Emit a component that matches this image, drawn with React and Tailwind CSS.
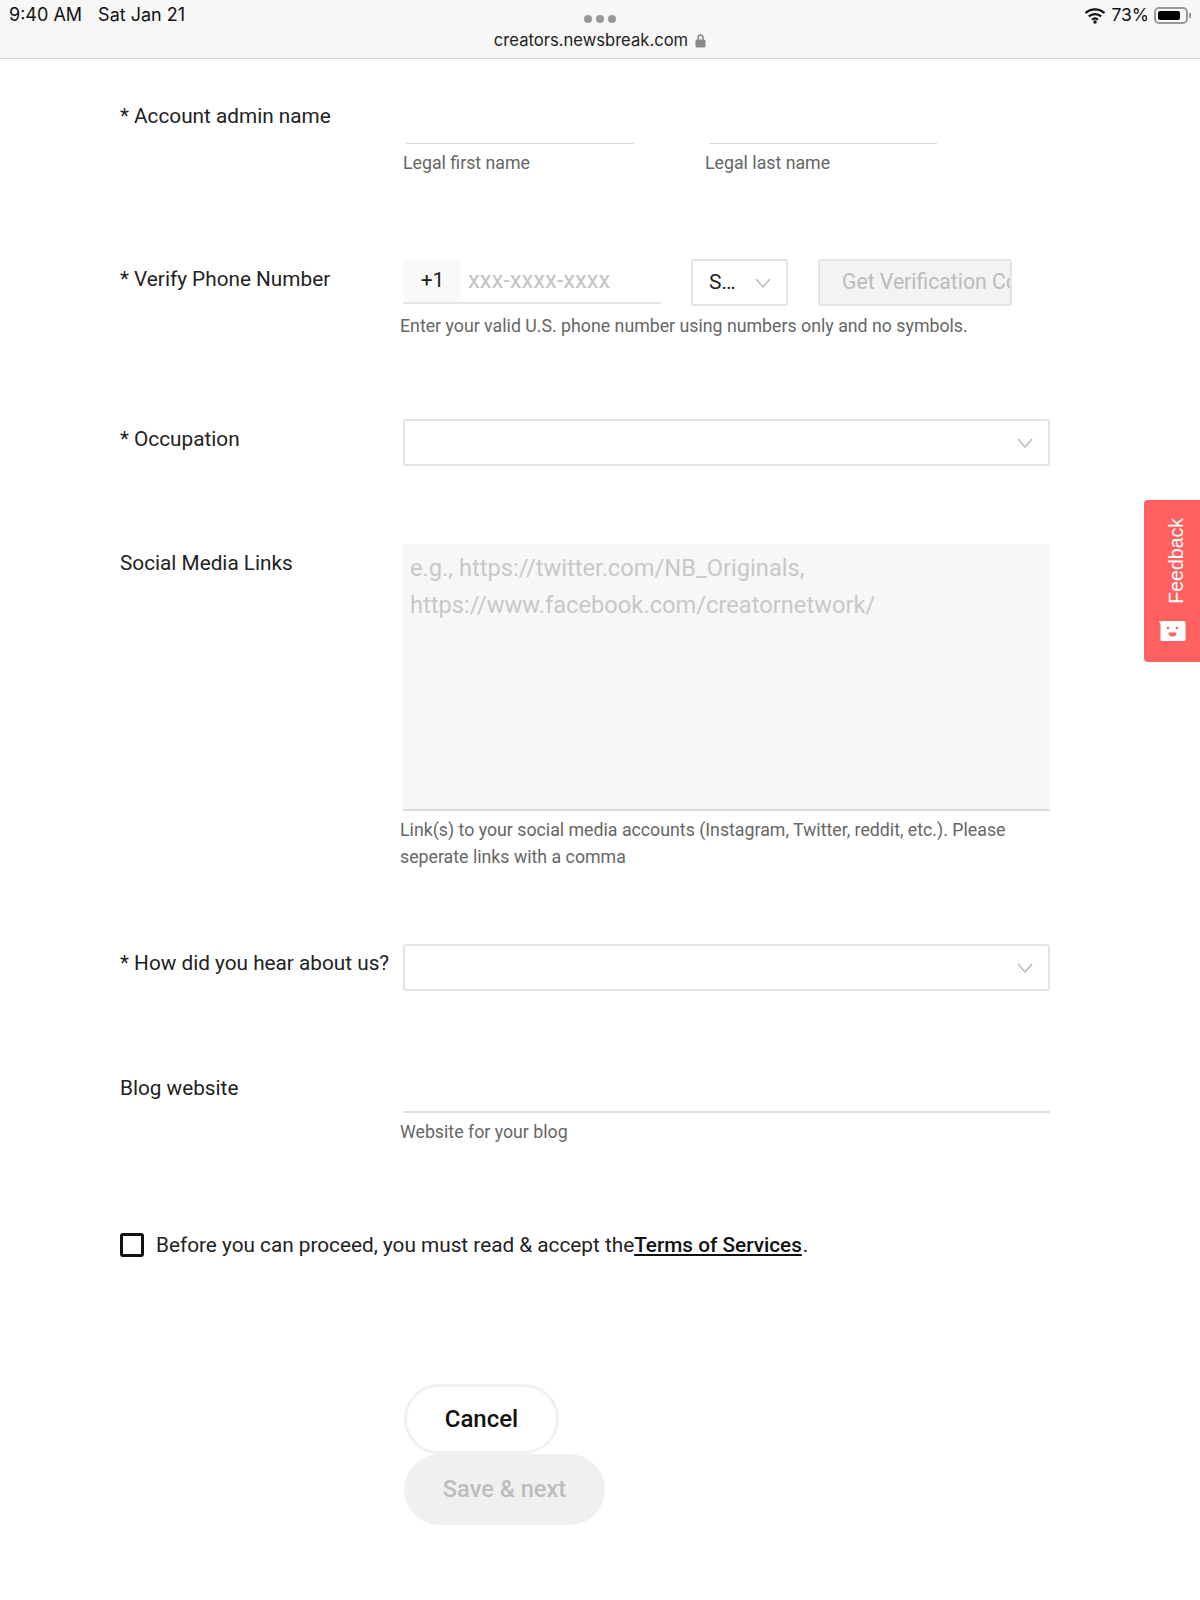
import React from "react";

const Chevron = () => (
  <svg width="16" height="10" viewBox="0 0 16 10" fill="none" stroke="#b4b4b4" strokeWidth="1.2"><path d="M1 1l7 8 7-8" /></svg>
);

const Label = ({ children, className = "" }) => (
  <div className={`w-[283px] shrink-0 text-[20.75px] leading-[28px] text-[#222] ${className}`}>{children}</div>
);

const Help = ({ children, className = "" }) => (
  <div className={`text-[17.75px] leading-[27px] text-[#666] ${className}`}>{children}</div>
);

const SelectBox = () => (
  <div className="w-[647px] h-[47px] border-2 border-[#e4e4e4] rounded-[3px] flex items-center justify-end pr-[15px]"><Chevron /></div>
);

export default function App() {
  return (
    <div className="relative w-[1200px] h-[1600px] bg-white overflow-hidden font-['Roboto',sans-serif]">
      <div className="h-[59px] border-b border-[#d4d4d4] bg-[#f7f7f7] relative">
        <div className="flex items-center justify-between px-[9px] h-[28px] pt-[2px]">
          <div className="flex gap-[16px] text-[18px] leading-[28px] text-[#111] font-['Inter',sans-serif]"><span>9:40 AM</span><span>Sat Jan 21</span></div>
          <div className="flex items-center text-[17.5px] text-[#111] font-['Inter',sans-serif]">
            <svg width="22" height="17" viewBox="0 0 22 17" className="mr-[5px]"><path d="M1.500 6a14 14 0 0 1 19 0M4.800 9.400a9.300 9.300 0 0 1 12.400 0M8 12.600a4.600 4.600 0 0 1 6 0" fill="none" stroke="#111" strokeWidth="2.200" /><circle cx="11" cy="15" r="1.700" fill="#111" /></svg>
            <span>73%</span>
            <div className="ml-[5px] w-[34px] h-[17px] border-2 border-[#999] rounded-[5px] p-[2px]"><div className="w-[22px] h-full rounded-[2px] bg-black" /></div>
            <div className="w-[2px] h-[5px] bg-[#999] ml-[1px]" />
          </div>
        </div>
        <div className="absolute left-[584px] top-[15px] flex gap-[4px]">
          <div className="w-[8px] h-[8px] rounded-full bg-[#999]" /><div className="w-[8px] h-[8px] rounded-full bg-[#999]" /><div className="w-[8px] h-[8px] rounded-full bg-[#999]" />
        </div>
        <div className="flex items-center justify-center gap-[7px] text-[16.6px] leading-[24px] text-[#222] font-['Inter',sans-serif]">
          <span>creators.newsbreak.com</span>
          <svg width="11" height="15" viewBox="0 0 11 15"><path d="M3 7V4.500a2.500 2.500 0 0 1 5 0V7" fill="none" stroke="#8a8a8a" strokeWidth="1.500" /><rect x="0.500" y="6.500" width="10" height="8" rx="1.500" fill="#8a8a8a" /></svg>
        </div>
      </div>

      <div className="pl-[120px] pt-[43px]">
        <div className="flex">
          <Label>* Account admin name</Label>
          <div className="pt-[41px]">
            <div className="flex gap-[75px] pl-[3px]">
              <div className="w-[228px] border-b border-[#d8d8d8]" />
              <div className="w-[228px] border-b border-[#d8d8d8]" />
            </div>
            <div className="flex mt-[6px]">
              <Help className="w-[302px]">Legal first name</Help>
              <Help>Legal last name</Help>
            </div>
          </div>
        </div>

        <div className="flex mt-[82px]">
          <Label className="pt-[6px]">* Verify Phone Number</Label>
          <div>
            <div className="flex">
              <div className="flex w-[258px] h-[45px] border-b-2 border-[#e4e4e4]">
                <div className="w-[57px] bg-[#f9f9f9] flex items-center justify-center text-[21px] text-[#222] pl-[2px]">+1</div>
                <div className="pl-[8px] flex items-center text-[23.7px] text-[#c4c4c4]">xxx-xxxx-xxxx</div>
              </div>
              <div className="ml-[30px] w-[97px] h-[47px] border-2 border-[#e4e4e4] rounded-[3px] flex items-center justify-between pl-[16px] pr-[15px] text-[21px] text-[#222]">
                <span>S…</span><Chevron />
              </div>
              <div className="ml-[30px] w-[194px] h-[47px] border-2 border-[#e4e4e4] rounded-[3px] bg-[#f3f3f3] pl-[22px] overflow-hidden whitespace-nowrap text-[21.2px] leading-[41px] text-[#bcbcbc]">Get Verification Code</div>
            </div>
            <Help className="-ml-[3px] mt-[7px]">Enter your valid U.S. phone number using numbers only and no symbols.</Help>
          </div>
        </div>

        <div className="flex mt-[79px]">
          <Label className="pt-[6px]">* Occupation</Label>
          <SelectBox />
        </div>

        <div className="flex mt-[78px]">
          <Label className="pt-[5px]">Social Media Links</Label>
          <div>
            <div className="w-[647px] h-[267px] bg-[#f7f7f7] border-b-2 border-[#dcdcdc] pl-[7px] pt-[6px] text-[23.7px] leading-[37px] text-[#c8c8c8]">
              <div>e.g., https://twitter.com/NB_Originals,</div>
              <div>https://www.facebook.com/creatornetwork/</div>
            </div>
            <Help className="-ml-[3px] mt-[6px]">
              <div>Link(s) to your social media accounts (Instagram, Twitter, reddit, etc.). Please</div>
              <div>seperate links with a comma</div>
            </Help>
          </div>
        </div>

        <div className="flex mt-[73px]">
          <Label className="pt-[5px]">* How did you hear about us?</Label>
          <SelectBox />
        </div>

        <div className="flex mt-[83px]">
          <Label>Blog website</Label>
          <div>
            <div className="w-[647px] h-[39px] border-b-2 border-[#e0e0e0]" />
            <Help className="-ml-[3px] mt-[6px]">Website for your blog</Help>
          </div>
        </div>

        <div className="flex items-center mt-[85px] text-[20.75px] leading-[28px] text-[#222]">
          <div className="w-[24px] h-[24px] border-[3px] border-[#111] rounded-[3px] mr-[12px]" />
          <span>Before you can proceed, you must read &amp; accept the</span>
          <span className="font-medium underline text-[#111]">Terms of Services</span>
          <span className="ml-[1px]">.</span>
        </div>

        <div className="ml-[284px] mt-[125px] flex flex-col items-start">
          <div className="w-[155px] h-[70px] border-[3px] border-[#f1f1f1] rounded-full flex items-center justify-center text-[24px] font-medium text-[#111]">Cancel</div>
          <div className="w-[201px] h-[71px] bg-[#f0f0f0] rounded-full flex items-center justify-center text-[23.6px] font-medium text-[#bdbdbd]">Save &amp; next</div>
        </div>
      </div>

      <div className="absolute left-[1144px] top-[500px] w-[56px] h-[162px] bg-[#ff6060] rounded-l-[4px] flex flex-col items-center justify-end pb-[20px]">
        <div className="[writing-mode:vertical-rl] rotate-180 text-[19.5px] leading-[24px] text-white font-['Liberation_Sans',sans-serif] mb-[16px] ml-[8px]">Feedback</div>
        <svg width="28" height="22" viewBox="0 0 28 22"><path d="M1 1h25a1.500 1.500 0 0 1 1.500 1.500v17a1.500 1.500 0 0 1-1.500 1.500H4a1.500 1.500 0 0 1-1.500-1.500V4z" fill="#fff" /><circle cx="10" cy="8" r="1.300" fill="#ff6060" /><circle cx="19" cy="8" r="1.300" fill="#ff6060" /><path d="M10.500 12.500h8a4 4 0 0 1-8 0z" fill="#ff6060" /></svg>
      </div>
    </div>
  );
}
